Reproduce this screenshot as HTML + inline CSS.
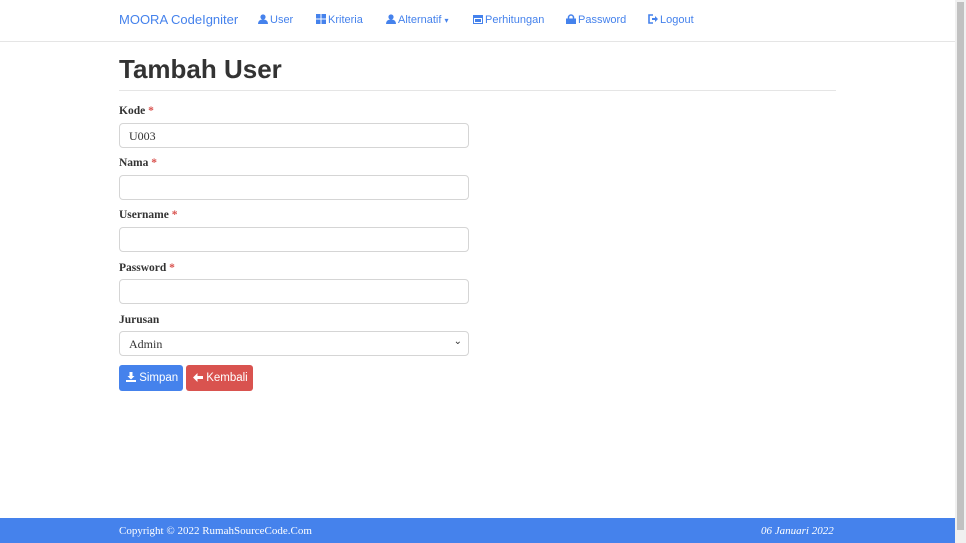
<!DOCTYPE html>
<html><head><style>
*{box-sizing:border-box}
body{margin:0;width:966px;height:543px;overflow:hidden;background:#fff;font-family:"Liberation Serif",serif;color:#333;position:relative}
.nav{position:absolute;left:0;top:0;width:955px;height:42px;background:#fff;border-bottom:1px solid #e5e5e5}
.nav a{position:absolute;top:14px;font-family:"Liberation Sans",sans-serif;font-size:11px;color:#4582ec;text-decoration:none;white-space:nowrap;line-height:12px}
.nav a svg{vertical-align:-1px;margin-right:2px}
.brand{font-size:13px!important;top:13px!important;line-height:14px!important}
h1{position:absolute;left:119px;top:54px;margin:0;font-family:"Liberation Sans",sans-serif;font-weight:bold;font-size:26px;color:#333}
.hr{position:absolute;left:119px;top:90px;width:717px;border-top:1px solid #e5e5e5}
label{position:absolute;left:119px;font-weight:bold;font-size:11.5px;color:#333}
label span{color:#d9534f}
.in{position:absolute;left:119px;width:350px;height:25px;border:1px solid #d5d5d5;border-radius:4px;font-size:12px;padding:5px 9px;color:#333}
.btn{position:absolute;top:365px;height:26px;border-radius:3px;color:#fff;font-family:"Liberation Sans",sans-serif;font-size:11.5px;padding:7px 7px;line-height:13px;white-space:nowrap}
.foot{position:absolute;left:0;top:518px;width:955px;height:25px;background:#4582ec;color:#fff;font-size:11px}
.sb{position:absolute;right:0;top:0;width:11px;height:543px;background:#f0f0f0}
.sb div{position:absolute;left:2px;top:2px;width:7px;height:528px;background:#c1c1c1}
</style></head><body>
<div class="nav">
<a class="brand" style="left:119px">MOORA CodeIgniter</a>
<a style="left:258px"><svg width="10" height="10" viewBox="0 0 10 10"><circle cx="5" cy="3" r="2.6" fill="#4582ec"/><path d="M0 10Q0 5.5 5 5.5Q10 5.5 10 10Z" fill="#4582ec"/></svg>User</a>
<a style="left:316px"><svg width="10" height="10" viewBox="0 0 10 10" fill="#4582ec"><rect width="4.5" height="4.5"/><rect x="5.5" width="4.5" height="4.5"/><rect y="5.5" width="4.5" height="4.5"/><rect x="5.5" y="5.5" width="4.5" height="4.5"/></svg>Kriteria</a>
<a style="left:386px"><svg width="10" height="10" viewBox="0 0 10 10"><circle cx="5" cy="3" r="2.6" fill="#4582ec"/><path d="M0 10Q0 5.5 5 5.5Q10 5.5 10 10Z" fill="#4582ec"/></svg>Alternatif <span style="font-size:8px">▾</span></a>
<a style="left:473px"><svg width="10" height="10" viewBox="0 0 10 10" fill="#4582ec"><rect y="1" width="10" height="9"/><rect x="1" y="4" width="8" height="5" fill="#fff"/><rect x="2" y="5" width="6" height="3"/></svg>Perhitungan</a>
<a style="left:566px"><svg width="10" height="10" viewBox="0 0 10 10"><path d="M2.5 5V3.5a2.5 2.5 0 015 0V5" stroke="#4582ec" stroke-width="1.5" fill="none"/><rect y="4.5" width="10" height="5.5" fill="#4582ec"/></svg>Password</a>
<a style="left:648px"><svg width="10" height="10" viewBox="0 0 10 10"><path d="M5 1H1v8h4" stroke="#4582ec" stroke-width="1.6" fill="none"/><path d="M4 4h3V2l3 3-3 3V6H4z" fill="#4582ec"/></svg>Logout</a>
</div>
<h1>Tambah User</h1>
<div class="hr"></div>
<label style="top:105px">Kode <span>*</span></label>
<div class="in" style="top:123px">U003</div>
<label style="top:157px">Nama <span>*</span></label>
<div class="in" style="top:175px"></div>
<label style="top:209px">Username <span>*</span></label>
<div class="in" style="top:227px"></div>
<label style="top:262px">Password <span>*</span></label>
<div class="in" style="top:279px"></div>
<label style="top:314px">Jurusan</label>
<div class="in" style="top:331px">Admin<span style="position:absolute;right:6px;top:4px;font-size:10px">⌄</span></div>
<div class="btn" style="left:119px;width:64px;background:#4582ec"><svg width="10" height="10" viewBox="0 0 10 10" fill="#fff" style="vertical-align:-1px"><path d="M3.5 0h3v4h2L5 7.5 1.5 4h2z"/><rect y="8" width="10" height="2"/></svg> Simpan</div>
<div class="btn" style="left:186px;width:67px;background:#d9534f"><svg width="10" height="9" viewBox="0 0 10 9" fill="#fff" style="vertical-align:-1px"><path d="M0 4.5L4.5 0v3H10v3H4.5v3z"/></svg> Kembali</div>
<div class="foot"><span style="position:absolute;left:119px;top:7px">Copyright © 2022 RumahSourceCode.Com</span><i style="position:absolute;left:761px;top:7px">06 Januari 2022</i></div>
<div class="sb"><div></div></div>
</body></html>
